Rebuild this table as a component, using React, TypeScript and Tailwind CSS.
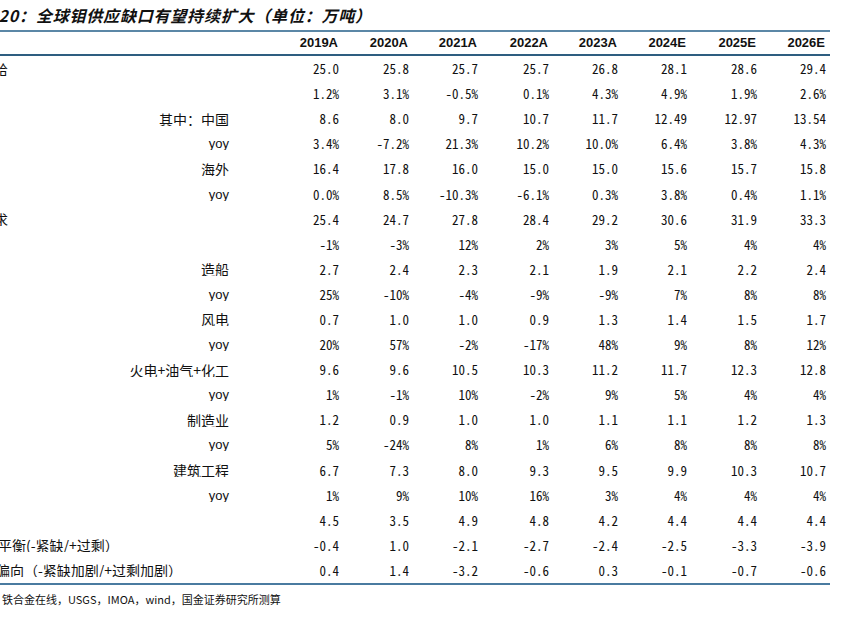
import React from 'react'

// Global molybdenum supply/demand table (rows cut at the left edge, as in the source report)

const years = ['2019A', '2020A', '2021A', '2022A', '2023A', '2024E', '2025E', '2026E']

type Row = {
  main?: string
  shift?: string
  sub?: string
  latin?: boolean
  values: string[]
}

const rows: Row[] = [
  { main: '供给', shift: '-ml-[20px]', values: ['25.0', '25.8', '25.7', '25.7', '26.8', '28.1', '28.6', '29.4'] },
  { values: ['1.2%', '3.1%', '-0.5%', '0.1%', '4.3%', '4.9%', '1.9%', '2.6%'] },
  { sub: '其中：中国', values: ['8.6', '8.0', '9.7', '10.7', '11.7', '12.49', '12.97', '13.54'] },
  { sub: 'yoy', latin: true, values: ['3.4%', '-7.2%', '21.3%', '10.2%', '10.0%', '6.4%', '3.8%', '4.3%'] },
  { sub: '海外', values: ['16.4', '17.8', '16.0', '15.0', '15.0', '15.6', '15.7', '15.8'] },
  { sub: 'yoy', latin: true, values: ['0.0%', '8.5%', '-10.3%', '-6.1%', '0.3%', '3.8%', '0.4%', '1.1%'] },
  { main: '需求', shift: '-ml-[20px]', values: ['25.4', '24.7', '27.8', '28.4', '29.2', '30.6', '31.9', '33.3'] },
  { values: ['-1%', '-3%', '12%', '2%', '3%', '5%', '4%', '4%'] },
  { sub: '造船', values: ['2.7', '2.4', '2.3', '2.1', '1.9', '2.1', '2.2', '2.4'] },
  { sub: 'yoy', latin: true, values: ['25%', '-10%', '-4%', '-9%', '-9%', '7%', '8%', '8%'] },
  { sub: '风电', values: ['0.7', '1.0', '1.0', '0.9', '1.3', '1.4', '1.5', '1.7'] },
  { sub: 'yoy', latin: true, values: ['20%', '57%', '-2%', '-17%', '48%', '9%', '8%', '12%'] },
  { sub: '火电+油气+化工', values: ['9.6', '9.6', '10.5', '10.3', '11.2', '11.7', '12.3', '12.8'] },
  { sub: 'yoy', latin: true, values: ['1%', '-1%', '10%', '-2%', '9%', '5%', '4%', '4%'] },
  { sub: '制造业', values: ['1.2', '0.9', '1.0', '1.0', '1.1', '1.1', '1.2', '1.3'] },
  { sub: 'yoy', latin: true, values: ['5%', '-24%', '8%', '1%', '6%', '8%', '8%', '8%'] },
  { sub: '建筑工程', values: ['6.7', '7.3', '8.0', '9.3', '9.5', '9.9', '10.3', '10.7'] },
  { sub: 'yoy', latin: true, values: ['1%', '9%', '10%', '16%', '3%', '4%', '4%', '4%'] },
  { values: ['4.5', '3.5', '4.9', '4.8', '4.2', '4.4', '4.4', '4.4'] },
  { main: '供需平衡(-紧缺/+过剩）', shift: '-ml-[30px]', values: ['-0.4', '1.0', '-2.1', '-2.7', '-2.4', '-2.5', '-3.3', '-3.9'] },
  { main: '边际偏向（-紧缺加剧/+过剩加剧）', shift: '-ml-[32px]', values: ['0.4', '1.4', '-3.2', '-0.6', '0.3', '-0.1', '-0.7', '-0.6'] },
]

const grid =
  'grid grid-cols-[236px_37px_70px_70px_69px_71px_69px_69px_70px_69px]'
const cjk = "font-['Noto_Sans_CJK_SC',sans-serif]"
const num = "font-['Noto_Sans_CJK_SC',sans-serif] [font-feature-settings:'hwid']"
const latin = "font-['Liberation_Sans',Arial,sans-serif]"

export default function App() {
  return (
    <div className="relative h-[618px] w-[850px] overflow-hidden bg-white text-[#111]">
      <div className="flex h-[30px] items-center">
        <div className={`-ml-[35px] whitespace-nowrap text-[16px] font-bold italic tracking-[0.8px] ${cjk}`}>
          图表20：全球钼供应缺口有望持续扩大（单位：万吨）
        </div>
      </div>

      <div className="w-[830px] border-t-2 border-b-2 border-t-[#5b87a6] border-b-[#4a7ba0]">
        <div className={`${grid} h-[24px] items-center border-b-2 border-[#2e5e80]`}>
          <div />
          <div />
          {years.map((y) => (
            <div key={y} className={`pr-[5px] text-right text-[13px] font-bold ${latin}`}>
              {y}
            </div>
          ))}
        </div>

        {rows.map((r, i) => (
          <div key={i} className={`${grid} h-[25.1px] items-center`}>
            <div className="overflow-hidden whitespace-nowrap">
              {r.main && (
                <div className={`${r.shift} text-[14px] leading-none ${cjk}`}>{r.main}</div>
              )}
              {r.sub && (
                <div
                  className={`pr-[7px] text-right leading-none ${
                    r.latin ? `text-[13px] ${latin}` : `text-[14px] ${cjk}`
                  }`}
                >
                  {r.sub}
                </div>
              )}
            </div>
            <div />
            {r.values.map((v, j) => (
              <div key={j} className={`pr-[4px] text-right text-[13px] leading-none ${num}`}>
                {v}
              </div>
            ))}
          </div>
        ))}
      </div>

      <div className={`mt-[9px] pl-[2px] text-[11px] leading-none ${cjk}`}>
        铁合金在线，USGS，IMOA，wind，国金证券研究所测算
      </div>
    </div>
  )
}
